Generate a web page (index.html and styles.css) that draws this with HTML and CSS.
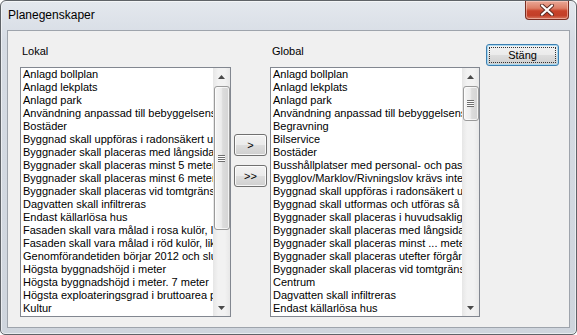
FILE: index.html
```html
<!DOCTYPE html>
<html lang="sv">
<head>
<meta charset="utf-8">
<title>Planegenskaper</title>
<link rel="stylesheet" href="styles.css">
</head>
<body>
<div class="window">
  <div class="titlebar">
    <span class="title">Planegenskaper</span>
    <div class="close">
      <svg width="16" height="12" viewBox="0 0 16 12">
        <path d="M3 1.5 L13 10.5 M13 1.5 L3 10.5" stroke="#5a2a22" stroke-width="4" stroke-linecap="round"/>
        <path d="M3 1.5 L13 10.5 M13 1.5 L3 10.5" stroke="#ffffff" stroke-width="2.2" stroke-linecap="round"/>
      </svg>
    </div>
  </div>
  <div class="client">
    <div class="col col-left">
      <div class="label">Lokal</div>
      <div class="listbox">
        <ul class="items">
          <li>Anlagd bollplan</li>
          <li>Anlagd lekplats</li>
          <li>Anlagd park</li>
          <li>Användning anpassad till bebyggelsens karaktär</li>
          <li>Bostäder</li>
          <li>Byggnad skall uppföras i radonsäkert utförande</li>
          <li>Byggnader skall placeras med långsidan mot gatan</li>
          <li>Byggnader skall placeras minst 5 meter från gräns</li>
          <li>Byggnader skall placeras minst 6 meter från gräns</li>
          <li>Byggnader skall placeras vid tomtgräns</li>
          <li>Dagvatten skall infiltreras</li>
          <li>Endast källarlösa hus</li>
          <li>Fasaden skall vara målad i rosa kulör, likt</li>
          <li>Fasaden skall vara målad i röd kulör, likt</li>
          <li>Genomförandetiden börjar 2012 och slutar</li>
          <li>Högsta byggnadshöjd i meter</li>
          <li>Högsta byggnadshöjd i meter. 7 meter</li>
          <li>Högsta exploateringsgrad i bruttoarea per</li>
          <li>Kultur</li>
        </ul>
        <div class="scrollbar">
          <div class="arrow"><svg width="7" height="4" viewBox="0 0 7 4"><path d="M0 4 L3.5 0 L7 4 Z" fill="#4a4a4a"/></svg></div>
          <div class="track">
            <div class="thumb" style="margin-top:1px;height:144px"><span class="grip"></span></div>
          </div>
          <div class="arrow"><svg width="7" height="4" viewBox="0 0 7 4"><path d="M0 0 L7 0 L3.5 4 Z" fill="#4a4a4a"/></svg></div>
        </div>
      </div>
    </div>
    <div class="mid">
      <button class="btn">&gt;</button>
      <button class="btn">&gt;&gt;</button>
    </div>
    <div class="col col-right">
      <div class="label">Global</div>
      <div class="listbox">
        <ul class="items">
          <li>Anlagd bollplan</li>
          <li>Anlagd lekplats</li>
          <li>Anlagd park</li>
          <li>Användning anpassad till bebyggelsens karaktär</li>
          <li>Begravning</li>
          <li>Bilservice</li>
          <li>Bostäder</li>
          <li>Busshållplatser med personal- och passagerare</li>
          <li>Bygglov/Marklov/Rivningslov krävs inte</li>
          <li>Byggnad skall uppföras i radonsäkert utförande</li>
          <li>Byggnad skall utformas och utföras så att</li>
          <li>Byggnader skall placeras i huvudsaklig</li>
          <li>Byggnader skall placeras med långsidan</li>
          <li>Byggnader skall placeras minst ... meter</li>
          <li>Byggnader skall placeras utefter förgårdsmark</li>
          <li>Byggnader skall placeras vid tomtgräns</li>
          <li>Centrum</li>
          <li>Dagvatten skall infiltreras</li>
          <li>Endast källarlösa hus</li>
        </ul>
        <div class="scrollbar">
          <div class="arrow"><svg width="7" height="4" viewBox="0 0 7 4"><path d="M0 4 L3.5 0 L7 4 Z" fill="#4a4a4a"/></svg></div>
          <div class="track">
            <div class="thumb" style="margin-top:1px;height:35px"><span class="grip"></span></div>
          </div>
          <div class="arrow"><svg width="7" height="4" viewBox="0 0 7 4"><path d="M0 0 L7 0 L3.5 4 Z" fill="#4a4a4a"/></svg></div>
        </div>
      </div>
    </div>
    <div class="side">
      <button class="btn btn-default"><span class="focus">Stäng</span></button>
    </div>
  </div>
</div>
</body>
</html>
```

FILE: styles.css
```css
html, body {
  margin: 0;
  padding: 0;
  width: 577px;
  height: 335px;
  overflow: hidden;
  background: #ffffff;
}

.window {
  box-sizing: border-box;
  width: 577px;
  height: 335px;
  border: 1px solid #5f6368;
  border-radius: 6px 6px 5px 5px;
  background: linear-gradient(180deg, #e4e8ee 0%, #d6dce4 12%, #cfd5dd 100%);
  box-shadow: inset 0 0 0 1px rgba(255, 255, 255, 0.55);
  display: flex;
  flex-direction: column;
  font-family: "Liberation Sans", Arial, sans-serif;
}

.titlebar {
  height: 29px;
  display: flex;
  justify-content: space-between;
  align-items: flex-start;
  flex: none;
}

.title {
  font-size: 12px;
  color: #000;
  padding: 7px 0 0 7px;
  line-height: 14px;
}

.close {
  margin: 0 7px 0 0;
  width: 44px;
  height: 19px;
  box-sizing: border-box;
  border: 1px solid #7a2e22;
  border-top: none;
  border-radius: 0 0 4px 4px;
  background: linear-gradient(180deg, #e9a897 0%, #dd7e66 40%, #c8432b 55%, #c23f28 80%, #d8775f 100%);
  box-shadow: inset 0 0 0 1px rgba(255, 220, 210, 0.5);
  display: flex;
  align-items: center;
  justify-content: center;
}

.client {
  flex: none;
  box-sizing: border-box;
  margin: 0 6px 0 6px;
  height: 298px;
  border: 1px solid #9ea4ac;
  background: #f0f0f0;
  display: flex;
  padding: 13px 0 0 12px;
  font-size: 11px;
  color: #000;
}

.col {
  display: flex;
  flex-direction: column;
}

.col-left { width: 211px; }
.col-right { width: 210px; }

.label {
  height: 23px;
  line-height: 13px;
  padding: 1px 0 0 2px;
  box-sizing: border-box;
}

.listbox {
  box-sizing: border-box;
  height: 250px;
  border: 1px solid #828790;
  background: #ffffff;
  display: flex;
}

.items {
  list-style: none;
  margin: 0;
  padding: 0;
  flex: 1;
  min-width: 0;
  overflow: hidden;
}

.items li {
  height: 13px;
  line-height: 13px;
  padding-left: 2px;
  white-space: nowrap;
  overflow: hidden;
}

.scrollbar {
  width: 17px;
  flex: none;
  display: flex;
  flex-direction: column;
  background: linear-gradient(90deg, #e6e6e6 0%, #f2f2f2 30%, #f2f2f2 70%, #e8e8e8 100%);
}

.arrow {
  height: 17px;
  flex: none;
  display: flex;
  align-items: center;
  justify-content: center;
}

.track {
  flex: 1;
  display: flex;
  flex-direction: column;
  align-items: center;
}

.thumb {
  box-sizing: border-box;
  width: 16px;
  border: 1px solid #9a9a9a;
  border-radius: 3px;
  background: linear-gradient(90deg, #f6f6f6 0%, #ececec 45%, #dcdcdc 55%, #d4d4d4 100%);
  box-shadow: inset 0 0 0 1px rgba(255, 255, 255, 0.7);
  display: flex;
  align-items: center;
  justify-content: center;
}

.grip {
  width: 7px;
  height: 7px;
  background: repeating-linear-gradient(180deg, #6e6e6e 0, #6e6e6e 1px, #fdfdfd 1px, #fdfdfd 2px);
}

.mid {
  width: 33px;
  margin: 0 3px 0 3px;
  padding-top: 90px;
  display: flex;
  flex-direction: column;
  gap: 9px;
}

.btn {
  box-sizing: border-box;
  height: 22px;
  width: 100%;
  padding: 0;
  border: 1px solid #707070;
  border-radius: 3px;
  background: linear-gradient(180deg, #f2f2f2 0%, #ebebeb 48%, #dddddd 52%, #cfcfcf 100%);
  box-shadow: inset 0 0 0 1px rgba(255, 255, 255, 0.8);
  font-family: "Liberation Sans", Arial, sans-serif;
  font-size: 11px;
  color: #000;
  line-height: 13px;
}

.side {
  margin-left: 6px;
  width: 73px;
}

.btn-default {
  width: 73px;
  height: 22px;
  border-color: #3c7fb1;
  box-shadow: inset 0 0 0 1px #a8d8f0;
  background: linear-gradient(180deg, #f2f2f2 0%, #ebebeb 48%, #dddddd 52%, #cfcfcf 100%);
  display: flex;
  align-items: stretch;
  justify-content: stretch;
  padding: 2px;
}

.focus {
  flex: 1;
  border: 1px dotted #333;
  display: flex;
  align-items: center;
  justify-content: center;
}
```
